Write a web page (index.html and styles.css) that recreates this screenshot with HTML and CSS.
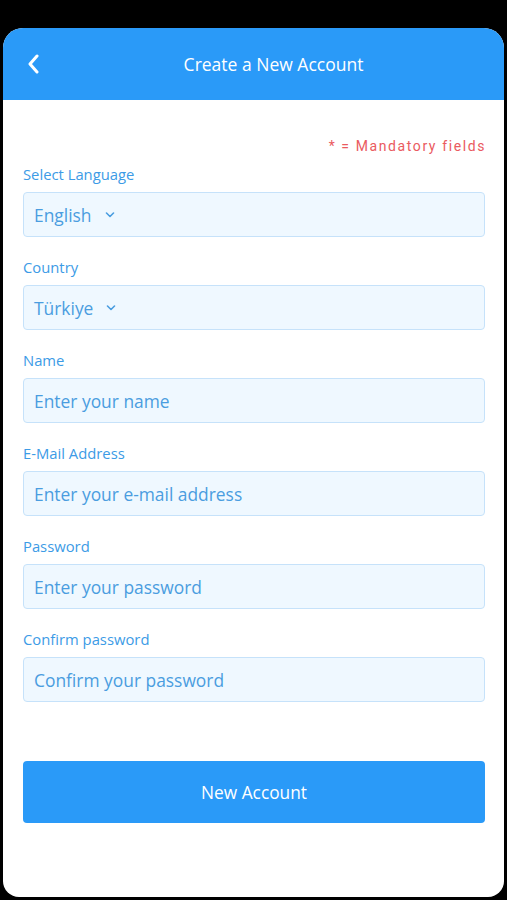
FILE: index.html
```html
<!DOCTYPE html>
<html lang="en">
<head>
<meta charset="utf-8">
<link rel="stylesheet" href="styles.css">
</head>
<body>
<div class="card">
  <header class="header">
    <svg class="back" width="14" height="20" viewBox="0 0 14 20"><path d="M10 2 L3 10 L10 18" fill="none" stroke="#fff" stroke-width="3" stroke-linecap="round" stroke-linejoin="round"/></svg>
    <h1 class="title">Create a New Account</h1>
  </header>
  <main class="content">
    <p class="mandatory">* = Mandatory fields</p>
    <div class="fields">
      <div class="field">
        <label class="label">Select Language</label>
        <div class="input select"><span>English</span><svg class="caret" width="10" height="6" viewBox="0 0 10 6"><path d="M1.5 1 L5 4.5 L8.5 1" fill="none" stroke="#4a9de0" stroke-width="1.6" stroke-linecap="round" stroke-linejoin="round"/></svg></div>
      </div>
      <div class="field">
        <label class="label">Country</label>
        <div class="input select"><span>Türkiye</span><svg class="caret" width="10" height="6" viewBox="0 0 10 6"><path d="M1.5 1 L5 4.5 L8.5 1" fill="none" stroke="#4a9de0" stroke-width="1.6" stroke-linecap="round" stroke-linejoin="round"/></svg></div>
      </div>
      <div class="field">
        <label class="label">Name</label>
        <div class="input">Enter your name</div>
      </div>
      <div class="field">
        <label class="label">E-Mail Address</label>
        <div class="input">Enter your e-mail address</div>
      </div>
      <div class="field">
        <label class="label">Password</label>
        <div class="input">Enter your password</div>
      </div>
      <div class="field">
        <label class="label">Confirm password</label>
        <div class="input">Confirm your password</div>
      </div>
    </div>
    <button class="submit">New Account</button>
  </main>
</div>
</body>
</html>
```
FILE: styles.css
```css
html, body {
  margin: 0;
  padding: 0;
  background: #000;
}
body {
  font-family: "Open Sans", "Noto Sans", sans-serif;
  padding: 28px 3px 3px 3px;
}
.card {
  background: #fff;
  border-radius: 20px 20px 16px 16px;
  overflow: hidden;
  height: 869px;
}
.header {
  height: 72px;
  background: #2a9af8;
  display: flex;
  align-items: center;
  justify-content: center;
  position: relative;
}
.back {
  position: absolute;
  left: 24px;
  top: 26px;
}
.title {
  margin: 0;
  color: #fff;
  font-weight: 400;
  font-size: 17.5px;
  padding-left: 40px;
}
.content {
  padding: 37px 19px 0 20px;
}
.mandatory {
  margin: 0;
  text-align: right;
  font-family: Roboto, sans-serif;
  font-size: 14px;
  line-height: 18px;
  letter-spacing: 1.6px;
  margin-right: -1px;
  color: #ea5a60;
}
.fields {
  display: flex;
  flex-direction: column;
  gap: 21px;
  margin-top: 10px;
}
.field {
  display: flex;
  flex-direction: column;
  gap: 9px;
}
.label {
  font-size: 14.8px;
  line-height: 18px;
  color: #3c9be6;
}
.input {
  height: 45px;
  box-sizing: border-box;
  border: 1px solid #c6e2fa;
  background: #eff8ff;
  border-radius: 4px;
  padding: 0 10px;
  display: flex;
  align-items: center;
  font-size: 17.4px;
  color: #4a9de0;
}
.select .caret {
  margin-left: 13px;
}
.submit {
  display: block;
  width: 100%;
  margin-top: 59px;
  height: 62px;
  border: none;
  border-radius: 4px;
  background: #2a9af8;
  color: #fff;
  font-family: "Open Sans", "Noto Sans", sans-serif;
  font-size: 17.3px;
}
```
